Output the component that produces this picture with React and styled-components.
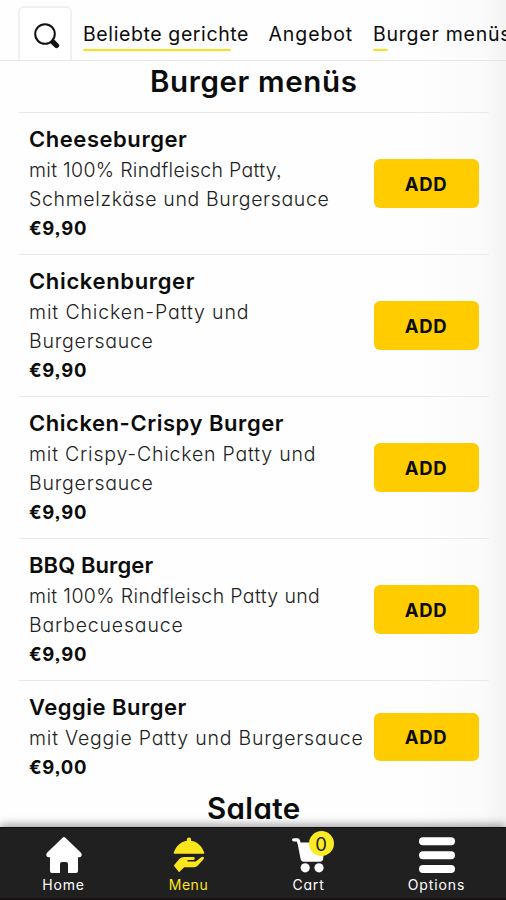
import styled, { createGlobalStyle } from "styled-components";

const GlobalStyle = createGlobalStyle`
  * {
    box-sizing: border-box;
  }
  body {
    margin: 0;
    background: #fff;
    color: #0c0c0c;
    font-family: Inter, "Open Sans", sans-serif;
    font-feature-settings: "cv11", "ss03";
    overflow: hidden;
  }
`;
const Page = styled.div`
  display: flex;
  flex-direction: column;
  width: 506px;
  height: 900px;
  overflow: hidden;
  background: linear-gradient(to right, #fefefe 0 420px, #fafafa 485px, #f3f3f3);
`;
const Header = styled.header`
  display: flex;
  flex-shrink: 0;
  height: 61px;
  padding: 6px 0 0 18px;
  border-bottom: 1px solid #e6e6e6;
`;
const SearchTab = styled.button`
  display: flex;
  flex-shrink: 0;
  align-items: center;
  justify-content: center;
  width: 54px;
  height: 54px;
  margin-right: 11px;
  padding: 4px 0 0 3px;
  background: #fff;
  border: 2px solid #f0f0f0;
  border-bottom: 0;
  border-radius: 6px 6px 0 0;
`;
const Category = styled.a`
  flex-shrink: 0;
  width: ${(p) => p.$width}px;
  padding-top: 14px;
  font-size: 19.5px;
  line-height: 29px;
  letter-spacing: ${(p) => p.$track || 0}px;
  white-space: nowrap;
  &::after {
    content: "";
    display: block;
    width: ${(p) => p.$line}px;
    height: 2px;
    border-radius: 1px;
    background: #f8e11c;
  }
`;
const Menu = styled.main`
  flex: 1;
  min-height: 0;
  padding: 5px 17.5px 0 19px;
  overflow: hidden;
`;
const Heading = styled.h2`
  margin: 0 0 16px;
  font-size: 29.5px;
  font-weight: 600;
  line-height: 30px;
  letter-spacing: ${(p) => p.$track || 0}px;
  text-align: center;
`;
const Item = styled.article`
  display: flex;
  align-items: center;
  justify-content: space-between;
  height: ${(p) => (p.$short ? 113 : 142)}px;
  padding: 1px 10px 0;
  border-top: 1.5px solid #e9e9e9;
`;
const Name = styled.h3`
  margin: 0 0 3px;
  font-size: 22px;
  font-weight: 600;
  line-height: 28px;
  letter-spacing: ${(p) => p.$track || 0}px;
  white-space: nowrap;
`;
const Description = styled.div`
  color: #222;
  font-size: 19.5px;
  font-weight: 300;
  line-height: 29.2px;
  letter-spacing: ${(p) => p.$track || 0}px;
  white-space: nowrap;
`;
const Price = styled.div`
  font-size: 18.5px;
  font-weight: 650;
  line-height: 29px;
  letter-spacing: 0.7px;
`;
const Info = styled.div`
  width: 344px;
`;
const AddButton = styled.button`
  flex-shrink: 0;
  width: 105px;
  height: 48.5px;
  margin-bottom: 1px;
  padding: 0;
  color: #0c0c0c;
  background: #fc0;
  border: 0;
  border-radius: 6px;
  font: 700 18.5px Inter, sans-serif;
  letter-spacing: 0.6px;
`;
const NavBar = styled.nav`
  display: flex;
  flex-shrink: 0;
  height: 73px;
  background: #202020;
  border-top: 1px solid #101010;
  border-bottom: 2px solid #161214;
  box-shadow: 0 -2px 9px rgba(0, 0, 0, 0.4);
`;
const NavItem = styled.a`
  display: flex;
  flex-direction: column;
  align-items: center;
  width: ${(p) => p.$width}px;
  padding-top: 8px;
  color: ${(p) => (p.$active ? "#fbe61e" : "#fff")};
  svg {
    flex-shrink: 0;
    overflow: visible;
  }
`;
const NavLabel = styled.span`
  margin-top: 1px;
  font-size: 14px;
  line-height: 20px;
  letter-spacing: ${(p) => p.$track || 0}px;
`;
const IconWrap = styled.span`
  position: relative;
  display: flex;
  height: 38px;
`;
const Badge = styled.span`
  position: absolute;
  top: -5px;
  left: 17px;
  width: 25px;
  height: 25px;
  color: #222;
  background: #fcea24;
  border-radius: 50%;
  font-size: 18.5px;
  line-height: 26px;
  text-align: center;
`;

const categories = [
  { label: "Beliebte gerichte", width: 185.5, line: 148, track: 0.6 },
  { label: "Angebot", width: 104.5, line: 0, track: 0.9 },
  { label: "Burger menüs", width: 140, line: 15, track: 0.75 },
];

const items = [
  {
    name: "Cheeseburger",
    track: 0.55,
    lines: [
      { text: "mit 100% Rindfleisch Patty,", track: 0.31 },
      { text: "Schmelzkäse und Burgersauce", track: 0.64 },
    ],
    price: "€9,90",
  },
  {
    name: "Chickenburger",
    track: 0.65,
    lines: [
      { text: "mit Chicken-Patty und", track: 0.88 },
      { text: "Burgersauce", track: 0.75 },
    ],
    price: "€9,90",
  },
  {
    name: "Chicken-Crispy Burger",
    track: 0.55,
    lines: [
      { text: "mit Crispy-Chicken Patty und", track: 0.8 },
      { text: "Burgersauce", track: 0.75 },
    ],
    price: "€9,90",
  },
  {
    name: "BBQ Burger",
    track: 0.1,
    lines: [
      { text: "mit 100% Rindfleisch Patty und", track: 0.37 },
      { text: "Barbecuesauce", track: 0.83 },
    ],
    price: "€9,90",
  },
  {
    name: "Veggie Burger",
    track: 0.5,
    lines: [{ text: "mit Veggie Patty und Burgersauce", track: 0.78 }],
    price: "€9,00",
  },
];

const SearchIcon = () => (
  <svg width="26" height="26" viewBox="0 0 26 26" fill="none" stroke="#111">
    <circle cx="11" cy="11" r="9.8" strokeWidth="2" />
    <path d="M17.6 17.6l2 2" strokeWidth="2.5" />
    <path d="M19.3 19.3l3.2 3.2" strokeWidth="5.2" strokeLinecap="round" />
  </svg>
);
const HomeIcon = () => (
  <svg width="36" height="38" viewBox="0 0 36 38" fill="currentColor">
    <path d="M16.6 1.8q1.4-1.500 2.8 0L34.7 16.6q1.2 1.2 1 2.6-.3 2-2.3 2H32V35q0 2-2 2H22V28q0-2-2-2h-4q-2 0-2 2v9H6q-2 0-2-2V21.2H2.6q-2 0-2.3-2-.2-1.4 1-2.6z" />
  </svg>
);
const DishIcon = () => (
  <svg width="32" height="38" viewBox="0 0 32 38" fill="currentColor">
    <path d="M1.6 17.8q-1.2 0-.9-1C3 10 7.5 5.7 14 4.7q-.5-3.2 2-3.2t2 3.2c6.5 1 11 5.3 13.3 12.1q.3 1-.9 1z" />
    <path d="M.8 29.5l5.7-6.7q2-1.9 4.5-1.9h9.4q1.6.2 1.5 1.5-.2 1.4-1.7 1.5h-5.7v1.500h8.2l5.6-4.2q1.8-1 2.5.2.5 1-.5 2.2l-5.7 6.2q-1.3 1.4-3.3 1.4H11.2L6 36.2z" />
  </svg>
);
const CartIcon = () => (
  <svg width="34" height="38" viewBox="0 0 34 38" fill="currentColor">
    <path d="M1.8 2.2h3.8q1.6 0 2.2 1.7l.8 2.5h24.2l-1.6 16q-.3 3.3-3.5 3.3H12q-3 0-3.500-3.200L5.800 8.600 4.700 5.500H1.800Q0 5.300 0 3.800t1.800-1.600z" />
    <circle cx="13.2" cy="31.8" r="4.600" />
    <circle cx="27" cy="31.8" r="4.600" />
  </svg>
);
const BarsIcon = () => (
  <svg width="36" height="38" viewBox="0 0 36 38" fill="currentColor">
    <rect y="1.3" width="36" height="8" rx="4" />
    <rect y="15.2" width="36" height="8" rx="4" />
    <rect y="29" width="36" height="8" rx="4" />
  </svg>
);

const App = () => {
  return (
    <Page>
      <GlobalStyle />
      <Header>
        <SearchTab aria-label="Suche">
          <SearchIcon />
        </SearchTab>
        {categories.map((c) => (
          <Category key={c.label} $width={c.width} $line={c.line} $track={c.track}>
            {c.label}
          </Category>
        ))}
      </Header>
      <Menu>
        <Heading $track={0.65}>Burger menüs</Heading>
        {items.map((item) => (
          <Item key={item.name} $short={item.lines.length === 1}>
            <Info>
              <Name $track={item.track}>{item.name}</Name>
              {item.lines.map((line) => (
                <Description key={line.text} $track={line.track}>
                  {line.text}
                </Description>
              ))}
              <Price>{item.price}</Price>
            </Info>
            <AddButton>ADD</AddButton>
          </Item>
        ))}
        <Heading $track={0.4}>Salate</Heading>
      </Menu>
      <NavBar>
        <NavItem $width={127}>
          <HomeIcon />
          <NavLabel $track={0.8}>Home</NavLabel>
        </NavItem>
        <NavItem $width={123} $active>
          <DishIcon />
          <NavLabel $track={0.5}>Menu</NavLabel>
        </NavItem>
        <NavItem $width={117}>
          <IconWrap>
            <CartIcon />
            <Badge>0</Badge>
          </IconWrap>
          <NavLabel $track={0.8}>Cart</NavLabel>
        </NavItem>
        <NavItem $width={139}>
          <BarsIcon />
          <NavLabel $track={0.9}>Options</NavLabel>
        </NavItem>
      </NavBar>
    </Page>
  );
};
export default App;
